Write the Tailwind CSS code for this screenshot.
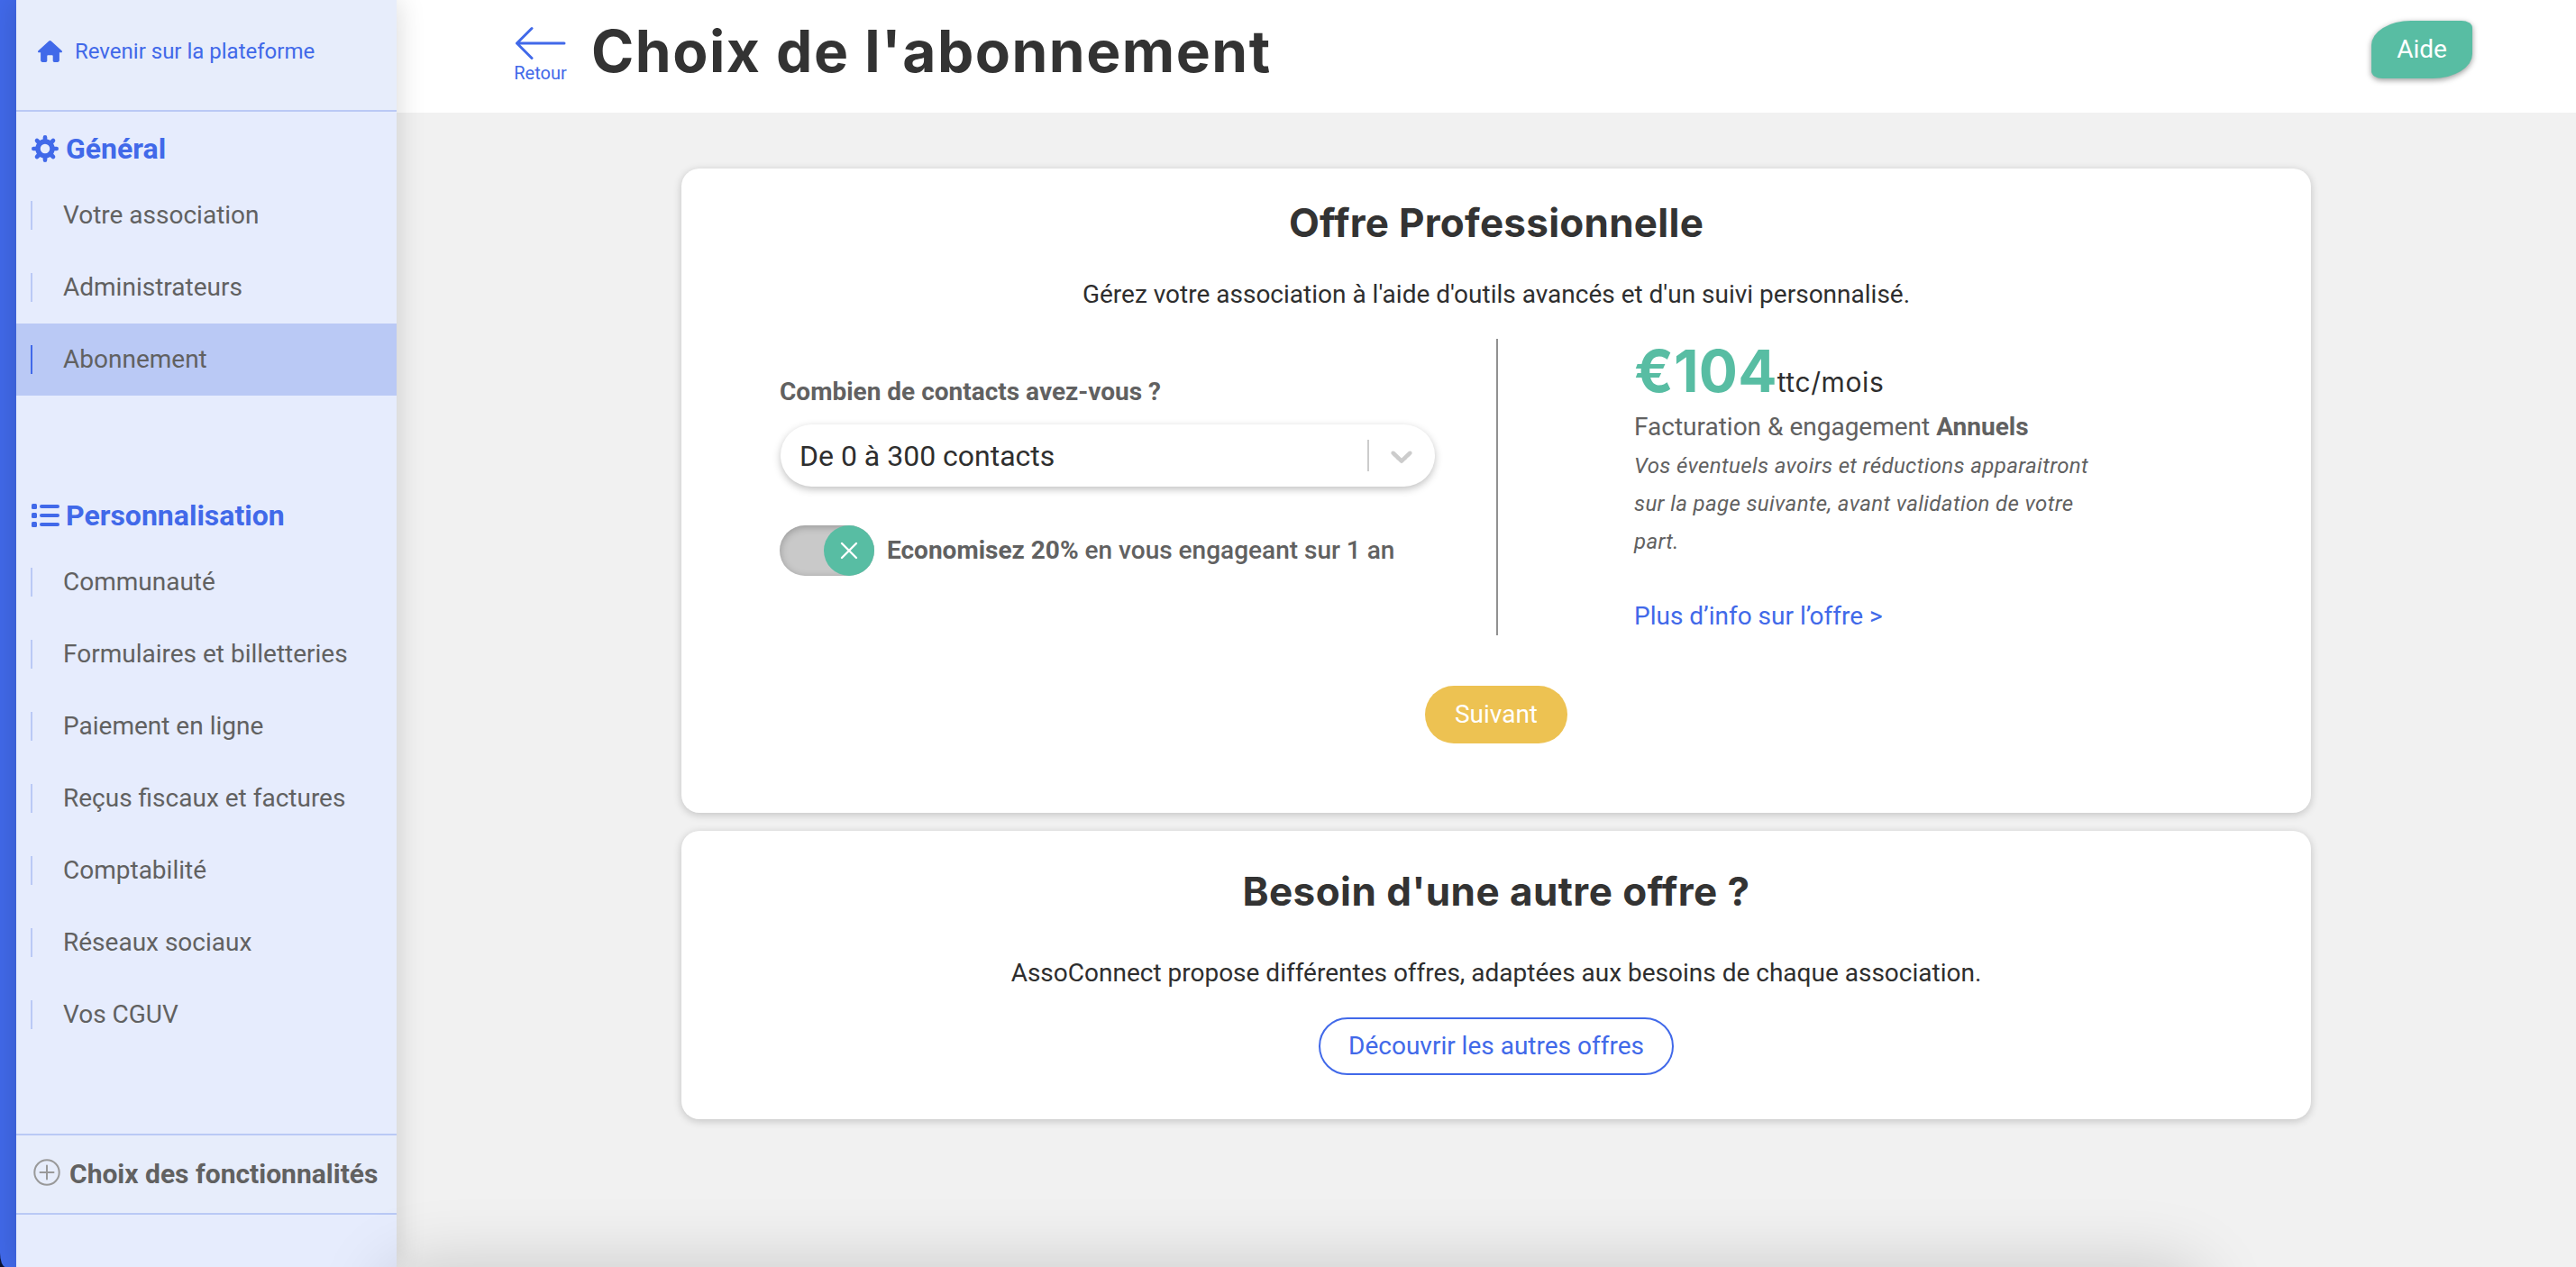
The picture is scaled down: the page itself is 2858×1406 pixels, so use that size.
<!doctype html>
<html lang="fr">

<head>
    <meta charset="utf-8">
    <meta name="viewport" content="width=device-width, initial-scale=1">

    <title>Choix de l'abonnement</title>

    <script src="https://cdn.jsdelivr.net/npm/@tailwindcss/browser@4"></script>
</head>

<body class="bg-[#f1f1f1] font-[Roboto,sans-serif] text-[28px] leading-[42px] text-[#2e2e2e]">
    <div class="relative flex h-[1406px] overflow-hidden">

        <!-- Sidebar -->
        <div class="w-[18px] shrink-0 bg-[#0a1230]">
            <div class="h-full bg-[#4169e9] rounded-bl-[6px_16px]"></div>
        </div>
        <aside class="relative z-10 w-[422px] shrink-0 bg-[#e6ecfd] text-[#616161] shadow-[0_0_30px_rgba(0,0,0,0.16)]">
            <a class="flex h-[124px] items-center border-b-2 border-[#bac9f5] bg-[#e7edfb] pb-[9px] pl-6 text-2xl text-[#4169e9]" href="#">
                <svg class="mr-[14px] h-6 w-[27px] shrink-0 fill-current" viewBox="0 0 27 24">
                    <path d="M12.3.6.5 11.2c-.9.8-.5 2 .7 2h1.900v8.600c0 1.300.8 2.100 2 2.100h3.600c1 0 1.600-.6 1.600-1.600v-5.200c0-.6.3-.9.9-.9h4.600c.6 0 .9.3.9.9v5.200c0 1 .6 1.600 1.600 1.600h3.600c1.200 0 2-.8 2-2.100v-8.600h1.900c1.200 0 1.600-1.200.7-2L14.700.6c-.8-.7-1.600-.7-2.400 0z" />
                </svg>
                Revenir sur la plateforme
            </a>

            <h2 class="flex h-[75px] items-center pt-[6px] pl-[17px] text-[32px] font-bold text-[#4169e9]">
                <svg class="mr-2 h-[30px] w-[30px] shrink-0" viewBox="0 0 30 30">
                    <circle cx="15" cy="15" r="8" fill="none" stroke="currentColor" stroke-width="5.5" />
                    <g stroke="currentColor" stroke-width="4.6" stroke-linecap="round">
                        <path d="M15 2.300v3M15 24.700v3M2.300 15h3M24.700 15h3M6 6l2 2M22 22l2 2M24 6l-2 2M6 24l2-2" />
                    </g>
                </svg>
                Général
            </h2>
            <nav>
                <a class="flex h-20 items-center pl-4" href="#"><span class="mr-[34px] h-8 w-[2px] bg-[#bac9f5]"></span>Votre association</a>
                <a class="flex h-20 items-center pl-4" href="#"><span class="mr-[34px] h-8 w-[2px] bg-[#bac9f5]"></span>Administrateurs</a>
                <a class="flex h-20 items-center bg-[#bac9f5] pl-4" href="#"><span class="mr-[34px] h-8 w-[2px] bg-[#4169e9]"></span>Abonnement</a>
            </nav>

            <h2 class="mt-[92px] flex h-[75px] items-center pt-[6px] pl-[17px] text-[32px] font-bold text-[#4169e9]">
                <svg class="mr-[7px] h-[26px] w-[31px] shrink-0 fill-current" viewBox="0 0 31 26">
                    <rect width="6" height="6" rx="1.5" />
                    <rect y="10" width="6" height="6" rx="1.5" />
                    <rect y="20" width="6" height="6" rx="1.5" />
                    <rect x="9" y="1" width="22" height="4" rx="2" />
                    <rect x="9" y="11" width="22" height="4" rx="2" />
                    <rect x="9" y="21" width="22" height="4" rx="2" />
                </svg>
                Personnalisation
            </h2>
            <nav>
                <a class="flex h-20 items-center pl-4" href="#"><span class="mr-[34px] h-8 w-[2px] bg-[#bac9f5]"></span>Communauté</a>
                <a class="flex h-20 items-center pl-4" href="#"><span class="mr-[34px] h-8 w-[2px] bg-[#bac9f5]"></span>Formulaires et billetteries</a>
                <a class="flex h-20 items-center pl-4" href="#"><span class="mr-[34px] h-8 w-[2px] bg-[#bac9f5]"></span>Paiement en ligne</a>
                <a class="flex h-20 items-center pl-4" href="#"><span class="mr-[34px] h-8 w-[2px] bg-[#bac9f5]"></span>Reçus fiscaux et factures</a>
                <a class="flex h-20 items-center pl-4" href="#"><span class="mr-[34px] h-8 w-[2px] bg-[#bac9f5]"></span>Comptabilité</a>
                <a class="flex h-20 items-center pl-4" href="#"><span class="mr-[34px] h-8 w-[2px] bg-[#bac9f5]"></span>Réseaux sociaux</a>
                <a class="flex h-20 items-center pl-4" href="#"><span class="mr-[34px] h-8 w-[2px] bg-[#bac9f5]"></span>Vos CGUV</a>
            </nav>

            <a class="mt-[92px] flex h-[90px] items-center border-y-2 border-[#bac9f5] bg-[#e7edfb] pl-[19px] text-[30px] font-bold whitespace-nowrap" href="#">
                <svg class="mr-[10px] mb-1 h-[30px] w-[30px] shrink-0" viewBox="0 0 30 30" fill="none" stroke="#999" stroke-width="2" stroke-linecap="round">
                    <circle cx="15" cy="15" r="13.7" />
                    <path d="M15 7.500v15M7.500 15h15" />
                </svg>
                Choix des fonctionnalités
            </a>
        </aside>

        <div class="flex-1">
            <!-- Header -->
            <header class="flex h-[125px] items-start bg-white pr-[115px] pl-[130px]">
                <a class="mt-[29px] flex w-[59px] flex-col items-center text-xl leading-6 text-[#4169e9]" href="#">
                    <svg class="mb-[3px] h-[37px] w-[58px]" viewBox="0 0 58 37" fill="none" stroke="currentColor" stroke-width="3" stroke-linecap="round" stroke-linejoin="round">
                        <path d="M55 19H2.500M19 2.500 2.500 19 19 35.500" />
                    </svg>
                    Retour
                </a>
                <h1 class="mt-[17px] ml-[27px] font-[Inter,sans-serif] text-[64px] leading-[80px] font-bold tracking-[1.5px] text-[#333]">Choix de l'abonnement</h1>
                <button class="mt-[23px] ml-auto h-16 w-28 rounded-[44px_12px_44px_12px/27px_8px_27px_8px] bg-[#58bda3] text-white shadow-[0_2px_6px_rgba(0,0,0,0.4)]">Aide</button>
            </header>

            <main class="flex flex-col pt-[62px] pl-[316px]">
                <section class="flex h-[715px] w-[1808px] flex-col items-center rounded-[20px] bg-white pt-[30px] shadow-[0_2px_10px_rgba(0,0,0,0.2)]">
                    <h2 class="font-[Inter,sans-serif] text-[44px] leading-[60px] font-bold tracking-[0.25px] text-[#333]">Offre Professionnelle</h2>
                    <p class="mt-[29px]">Gérez votre association à l'aide d'outils avancés et d'un suivi personnalisé.</p>

                    <div class="mt-7 flex h-[329px] w-full pl-[110px] text-[#616161]">
                        <div class="w-[726px] pt-[38px]">
                            <label class="-ml-px block font-bold">Combien de contacts avez-vous ?</label>
                            <div class="mt-[15px] flex h-[69px] items-center rounded-full bg-white pl-[21px] text-[32px] text-[#2e2e2e] shadow-[0_3px_9px_rgba(0,0,0,0.25)]">
                                <span class="flex-1">De 0 à 300 contacts</span>
                                <span class="h-[35px] w-[2px] bg-[#ccc]"></span>
                                <svg class="mr-[17px] ml-4 h-10 w-10 fill-[#ccc]" viewBox="0 0 20 20">
                                    <path d="M4.516 7.548c.436-.446 1.043-.481 1.576 0L10 11.295l3.908-3.747c.533-.481 1.141-.446 1.574 0 .436.445.408 1.197 0 1.615-.406.418-4.695 4.502-4.695 4.502a1.095 1.095 0 0 1-1.576 0S4.924 9.581 4.516 9.163s-.436-1.170 0-1.615z" />
                                </svg>
                            </div>
                            <div class="mt-[43px] -ml-px flex items-center gap-[14px] whitespace-nowrap">
                                <span class="flex h-14 w-[105px] justify-end rounded-full bg-[#c9c9c9] shadow-[inset_0_2px_8px_rgba(0,0,0,0.25)]">
                                    <span class="flex h-14 w-14 items-center justify-center rounded-full bg-[#58bda3]">
                                        <svg class="h-5 w-5" viewBox="0 0 20 20" stroke="#fff" stroke-width="2.4" stroke-linecap="round">
                                            <path d="M2 2l16 16M18 2 2 18" />
                                        </svg>
                                    </span>
                                </span>
                                <span class="font-medium"><b class="font-bold">Economisez 20%</b> en vous engageant sur 1 an</span>
                            </div>
                        </div>

                        <div class="ml-[68px] w-[2px] bg-[#919191]"></div>

                        <div class="ml-[151px] pt-[6px]">
                            <p class="font-[Inter,sans-serif] text-[30px] leading-[60px] tracking-[0.6px] text-[#2e2e2e]"><span class="text-[64px] font-bold tracking-[0.2px] text-[#58bda3]">€104</span>ttc/mois</p>
                            <p class="-mt-px">Facturation &amp; engagement <b class="font-bold">Annuels</b></p>
                            <p class="mt-px text-2xl leading-[42px] tracking-[0.38px] italic">Vos éventuels avoirs et réductions apparaitront<br>sur la page suivante, avant validation de votre<br>part.</p>
                            <a class="mt-[41px] block text-[#4169e9]" href="#">Plus d’info sur l’offre &gt;</a>
                        </div>
                    </div>

                    <button class="mt-14 h-16 w-[158px] rounded-full bg-[#edc252] text-white">Suivant</button>
                </section>

                <section class="mt-5 flex h-[320px] w-[1808px] flex-col items-center rounded-[20px] bg-white pt-[37px] shadow-[0_2px_10px_rgba(0,0,0,0.2)]">
                    <h2 class="font-[Inter,sans-serif] text-[44px] leading-[60px] font-bold tracking-[0.45px] text-[#333]">Besoin d'une autre offre ?</h2>
                    <p class="mt-10">AssoConnect propose différentes offres, adaptées aux besoins de chaque association.</p>
                    <button class="mt-7 h-16 w-[394px] rounded-full border-2 border-[#4169e9] text-[#4169e9]">Découvrir les autres offres</button>
                </section>
            </main>
        </div>

        <!-- Shadow of the panel docked under the window -->
        <div class="absolute top-[1408px] left-[430px] z-20 h-40 w-[2010px] rounded-[30px] shadow-[0_0_80px_rgba(0,0,0,0.18)]"></div>
    </div>
</body>

</html>
